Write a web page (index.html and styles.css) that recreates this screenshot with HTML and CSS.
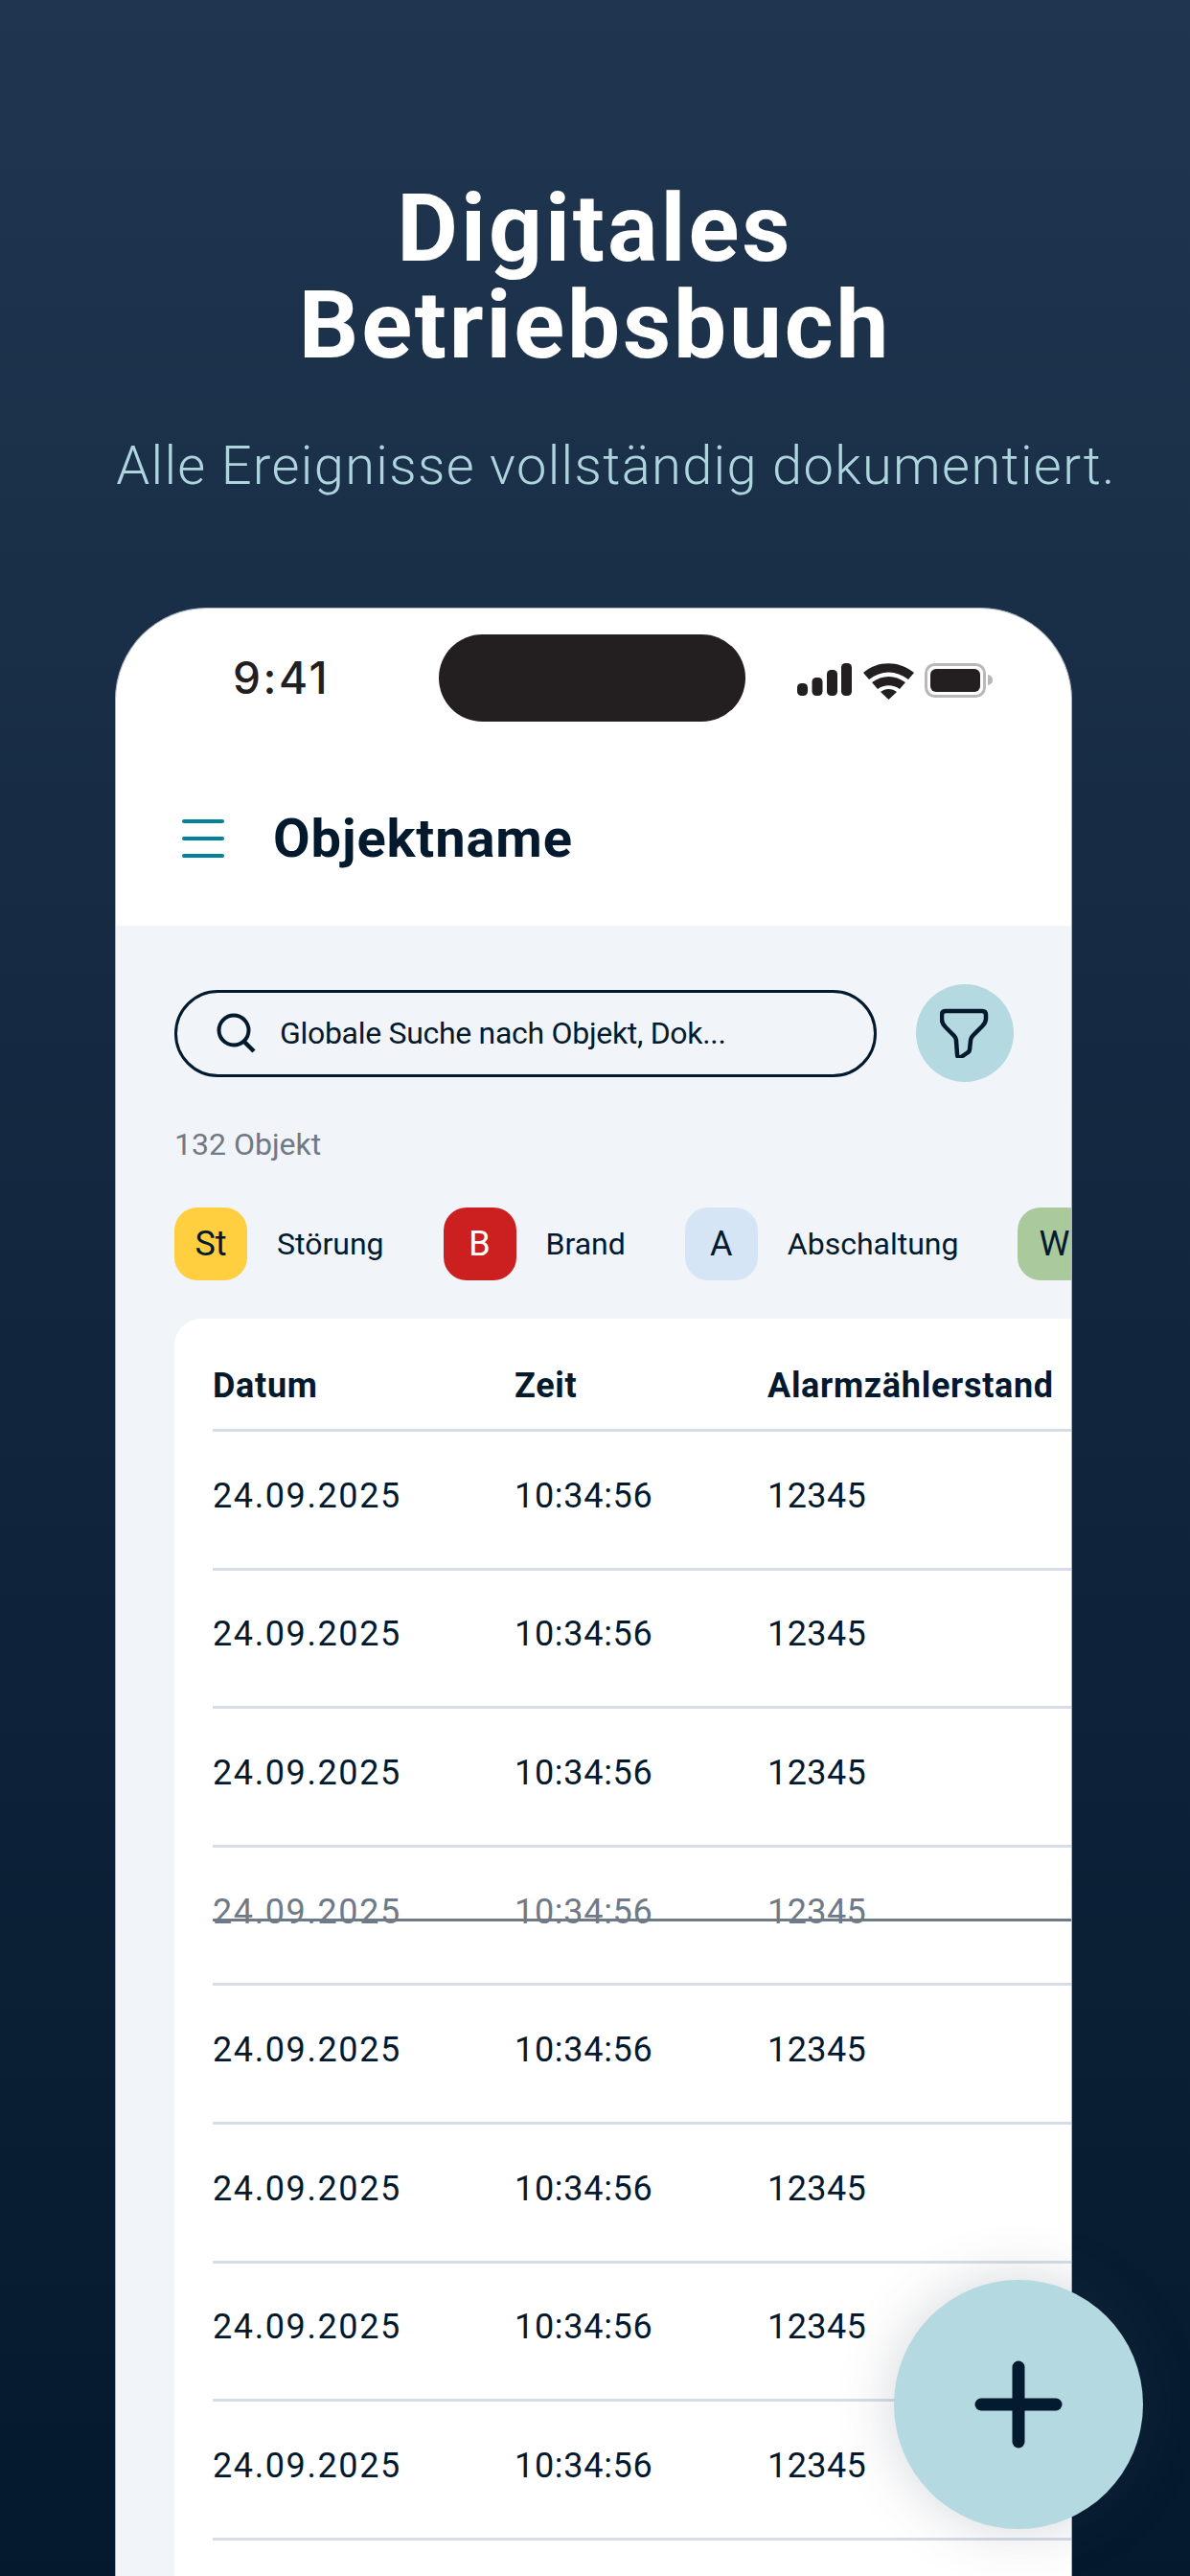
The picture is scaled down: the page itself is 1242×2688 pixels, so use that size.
FILE: index.html
```html
<!DOCTYPE html>
<html lang="de">
<head>
<meta charset="utf-8">
<title>Digitales Betriebsbuch</title>
<link rel="stylesheet" href="styles.css">
</head>
<body>
<div class="screen">
  <header class="hero">
    <h1 class="hero-title"><span class="hero-l1">Digitales</span><span class="hero-l2">Betriebsbuch</span></h1>
    <p class="hero-sub">Alle Ereignisse vollständig dokumentiert.</p>
  </header>
  <main class="phone">
    <div class="status">
      <span class="clock">9:41</span>
      <span class="island"></span>
      <svg class="status-icons" width="206" height="40" viewBox="0 0 206 40">
        <g fill="#231f20">
          <rect x="0" y="23" width="11" height="13" rx="4.5"/>
          <rect x="15.500" y="17" width="11" height="19" rx="4.500"/>
          <rect x="31" y="9" width="11" height="27" rx="4.500"/>
          <rect x="46" y="2" width="11" height="34" rx="4.500"/>
          <path d="M69 12 C 84 -1, 106 -1, 122 12 L 116 19 C 103 9, 88 9, 75 19 Z"/>
          <path d="M78 22 C 89 14, 102 14, 113 22 L 107 29 C 100 24, 91 24, 84 29 Z"/>
          <path d="M87 32 C 92 28, 99 28, 104 32 L 95.500 40 Z"/>
        </g>
        <rect x="134.500" y="3.500" width="61" height="33" rx="9" fill="none" stroke="#b8b8b8" stroke-width="3"/>
        <rect x="139" y="8" width="52" height="24" rx="6" fill="#231f20"/>
        <path d="M199 14 C 203 15, 204 17, 204 19.500 C 204 22, 203 24, 199 25 Z" fill="#b8b8b8"/>
      </svg>
    </div>
    <div class="appbar">
      <svg class="menu" width="44" height="40" viewBox="0 0 44 40"><g stroke="#00829b" stroke-width="4" stroke-linecap="round"><path d="M2 2H42"/><path d="M2 20H42"/><path d="M2 38H42"/></g></svg>
      <span class="appbar-title">Objektname</span>
    </div>
    <section class="content">
      <div class="searchrow">
        <div class="search">
          <svg width="42" height="42" viewBox="0 0 42 42" fill="none" stroke="#031a2e"><circle cx="18" cy="18" r="15.500" stroke-width="4"/><path d="M28 29 L39 40" stroke-width="4.500"/></svg>
          <span class="search-text">Globale Suche nach Objekt, Dok...</span>
        </div>
        <div class="filter">
          <svg width="52" height="52" viewBox="0 0 52 52" fill="none"><path d="M6 3 H44 C47 3 48 5 48 7 V11 C48 15 46 17 44 19 L35 28 C33 30 32 31 32 34 L31 43 C31 45 30 46 28 47 L22 51 C19 52 18 51 18 48 L17 34 C17 31 16 30 14 28 L6 20 C4 18 2 16 2 12 V7 C2 5 3 3 6 3 Z" stroke="#031a2e" stroke-width="4.500" stroke-linejoin="round"/></svg>
        </div>
      </div>
      <div class="count">132 Objekt</div>
      <div class="chips">
        <div class="chip"><span class="badge badge-st">St</span><span class="chip-label">Störung</span></div>
        <div class="chip"><span class="badge badge-b">B</span><span class="chip-label">Brand</span></div>
        <div class="chip"><span class="badge badge-a">A</span><span class="chip-label">Abschaltung</span></div>
        <div class="chip"><span class="badge badge-w">W</span></div>
      </div>
      <div class="table">
        <div class="row row-head"><span>Datum</span><span>Zeit</span><span>Alarmzählerstand</span></div>
        <div class="row"><span class="date">24.09.2025</span><span>10:34:56</span><span class="num">12345</span></div>
        <div class="row"><span class="date">24.09.2025</span><span>10:34:56</span><span class="num">12345</span></div>
        <div class="row"><span class="date">24.09.2025</span><span>10:34:56</span><span class="num">12345</span></div>
        <div class="row row-struck"><span class="date">24.09.2025</span><span>10:34:56</span><span class="num">12345</span></div>
        <div class="row"><span class="date">24.09.2025</span><span>10:34:56</span><span class="num">12345</span></div>
        <div class="row"><span class="date">24.09.2025</span><span>10:34:56</span><span class="num">12345</span></div>
        <div class="row"><span class="date">24.09.2025</span><span>10:34:56</span><span class="num">12345</span></div>
        <div class="row"><span class="date">24.09.2025</span><span>10:34:56</span><span class="num">12345</span></div>
      </div>
    </section>
  </main>
  <div class="fab">
    <svg width="92" height="92" viewBox="0 0 92 92" stroke="#041a2e" stroke-width="13" stroke-linecap="round"><path d="M46 7V85"/><path d="M7 46H85"/></svg>
  </div>
</div>
</body>
</html>
```

FILE: styles.css
```css
* { box-sizing: border-box; }
html, body { margin: 0; padding: 0; }
body { font-family: Roboto, "Noto Sans", sans-serif; color: #031a2e; }

.screen {
  position: relative;
  width: 1242px;
  height: 2688px;
  overflow: hidden;
  background: linear-gradient(180deg, #20354f 0%, #04192d 100%);
  display: flex;
  flex-direction: column;
}

.hero { height: 634px; padding-top: 188px; text-align: center; }
.hero-title { margin: 0; color: #fff; font-size: 98px; line-height: 101px; font-weight: 700; }
.hero-l1, .hero-l2 { display: block; }
.hero-l1 { letter-spacing: 3px; }
.hero-l2 { letter-spacing: 2.8px; }
.hero-sub { margin: 64px 0 0 44px; color: #aed4de; font-size: 56px; line-height: 64px; font-weight: 300; letter-spacing: 1.35px; }

.phone {
  flex: 1;
  margin-left: 120px;
  width: 999px;
  background: #fff;
  border: 1px solid #a9b2bf;
  border-bottom: 0;
  border-radius: 96px 96px 0 0;
  overflow: hidden;
  display: flex;
  flex-direction: column;
}

.status { height: 119px; position: relative; display: flex; justify-content: space-between; padding-left: 122px; }
.clock { font-family: Inter, sans-serif; font-weight: 500; font-size: 46px; line-height: 46px; margin-top: 49px; letter-spacing: 2.5px; color: #231f20; }
.island { position: absolute; left: 337px; top: 27px; width: 320px; height: 91px; border-radius: 46px; background: #231f20; }
.status-icons { margin: 55px 80px 0 0; }

.appbar { height: 212px; display: flex; align-items: center; padding: 30px 0 0 69px; gap: 51px; }
.menu { flex: none; }
.appbar-title { font-size: 56px; font-weight: 700; letter-spacing: 0.9px; color: #031a2e; }

.content { flex: 1; background: #f1f4f8; padding: 61px 0 0 61px; min-height: 0; }
.searchrow { display: flex; align-items: center; gap: 41px; }
.search { width: 733px; height: 91px; border: 3px solid #031a2e; border-radius: 46px; display: flex; align-items: center; padding-left: 41px; gap: 24px; }
.search-text { font-size: 32px; letter-spacing: -0.3px; }
.filter { width: 102px; height: 102px; border-radius: 50%; background: #b4d9e1; display: flex; align-items: center; justify-content: center; }

.count { margin-top: 45px; font-size: 32px; line-height: 40px; color: #6f7a88; }

.chips { margin-top: 46px; display: flex; gap: 62px; white-space: nowrap; }
.chip { display: flex; align-items: center; gap: 31px; flex: none; }
.badge { flex: none; width: 76px; height: 76px; border-radius: 24px; display: flex; align-items: center; justify-content: center; font-size: 36px; }
.badge-st { background: #ffcf40; }
.badge-b { background: #cc2020; color: #fff; }
.badge-a { background: #d6e5f5; }
.badge-w { background: #aaca9e; }
.chip-label { font-size: 32px; }

.table { margin-top: 40px; background: #fff; border-radius: 28px 0 0 0; padding-left: 40px; height: 1400px; }
.row { height: 144.600px; display: grid; grid-template-columns: 315px 264px 1fr; align-items: center; border-bottom: 3px solid #d7dde6; padding-bottom: 8px; font-size: 36px; letter-spacing: 0.7px; white-space: nowrap; position: relative; }
.row-head { height: 118px; font-weight: 700; padding: 24px 0 0; }
.date { letter-spacing: 1.6px; }
.num { letter-spacing: 0.4px; }
.row-struck { color: #6f7a88; }
.row-struck::after { content: ""; position: absolute; left: 0; right: 0; top: 74px; height: 3px; background: #6f7a88; }

.fab { position: absolute; left: 933px; top: 2379px; width: 260px; height: 260px; border-radius: 50%; background: #b4d9e1; display: flex; align-items: center; justify-content: center; box-shadow: 0 0 60px rgba(60,70,90,0.22); }
```
